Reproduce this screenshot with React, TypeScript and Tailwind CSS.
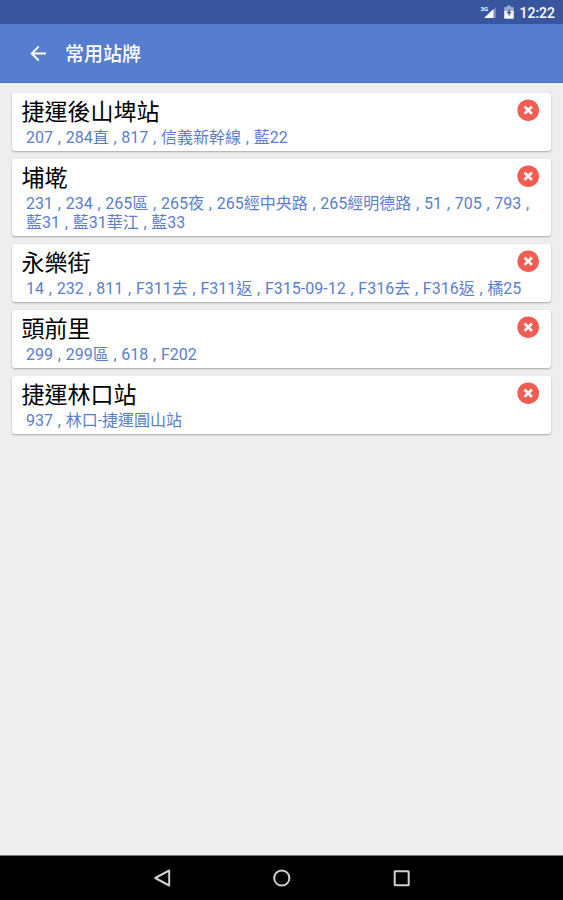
const stops = [
  { name: "捷運後山埤站", lines: ["207 , 284直 , 817 , 信義新幹線 , 藍22"] },
  {
    name: "埔墘",
    lines: [
      "231 , 234 , 265區 , 265夜 , 265經中央路 , 265經明德路 , 51 , 705 , 793 ,",
      "藍31 , 藍31華江 , 藍33",
    ],
  },
  { name: "永樂街", lines: ["14 , 232 , 811 , F311去 , F311返 , F315-09-12 , F316去 , F316返 , 橘25"] },
  { name: "頭前里", lines: ["299 , 299區 , 618 , F202"] },
  { name: "捷運林口站", lines: ["937 , 林口-捷運圓山站"] },
];

function StatusBar() {
  return (
    <div className="flex h-6 items-center justify-end bg-[#3a55a0] pr-2 text-white">
      <svg width="18" height="16" viewBox="0 0 18 16" className="mr-[6px]">
        <path d="M16 3 L16 14 L5 14 Z" fill="#fff" fillOpacity="0.3" />
        <path d="M13.500 5 L13.500 14 L4 14 Z" fill="#fff" />
        <text x="0.500" y="7" fontSize="6" fontWeight="700" fill="#fff" fontFamily="Roboto, sans-serif">3G</text>
      </svg>
      <svg width="10" height="14" viewBox="0 0 10 14" className="mr-[5px]">
        <path d="M3.2 0.5h3.6v1.4H9c.5 0 .8.3.8.8V6H.2V2.700c0-.5.3-.8.8-.8h2.200z" fill="#fff" fillOpacity="0.5" />
        <path d="M.2 6h9.600V13c0 .4-.3.8-.8.8H1c-.5 0-.8-.4-.8-.8Z" fill="#fff" fillOpacity="0.95" />
        <path d="M5.700 3.500 L2.600 8.300 H4.600 V11.500 L7.400 7.100 H5.700Z" fill="#3a55a0" />
      </svg>
      <span className="mt-px text-[14px] leading-none font-medium">12:22</span>
    </div>
  );
}

function RemoveIcon() {
  return (
    <svg width="22" height="22" viewBox="0 0 22 22" className="mt-[6px] mr-3 shrink-0">
      <circle cx="11.200" cy="11.200" r="10.800" fill="#f25c52" />
      <path d="M7.500 7.500 L14.900 14.900 M14.900 7.500 L7.500 14.900" stroke="#fff" strokeWidth="2.700" />
    </svg>
  );
}

export default function App() {
  return (
    <div
      lang="zh-Hant"
      className="flex h-[900px] w-[563px] flex-col overflow-hidden bg-[#eeeeee] font-[Roboto,'Noto_Sans_CJK_TC',sans-serif]"
    >
      <StatusBar />
      <header className="flex h-[59px] shrink-0 items-center border-b border-[#4f70bd] bg-[#567dcf] pl-[30px] text-white">
        <svg width="17" height="17" viewBox="0 0 17 17" fill="none" stroke="#fff" strokeWidth="1.900" className="mt-px">
          <path d="M16 8.500H2M8.700 1.500L1.700 8.500L8.700 15.500" />
        </svg>
        <h1 className="mt-[4px] ml-[18px] text-[19px] leading-6 font-medium">常用站牌</h1>
      </header>
      <main className="flex flex-1 flex-col gap-2 px-3 pt-[10px]">
        {stops.map((stop) => (
          <section
            key={stop.name}
            className="flex items-start rounded-[3px] bg-white pb-[4px] shadow-[0_1px_2px_rgba(0,0,0,0.3)]"
          >
            <div className="min-w-0 flex-1 pl-[10px]">
              <h2 className="-ml-[0.500px] h-[35px] text-[23px] leading-[39px] whitespace-nowrap text-black">{stop.name}</h2>
              <div className="-mr-8 pl-[4px] text-[16px] leading-[19px] [word-spacing:0.800px] whitespace-nowrap text-[#5b7ecb]">
                {stop.lines.map((line) => (
                  <p key={line}>{line}</p>
                ))}
              </div>
            </div>
            <RemoveIcon />
          </section>
        ))}
      </main>
      <nav className="flex h-[45px] shrink-0 justify-center gap-[101px] border-t border-[#777] bg-black pt-[12px]">
        <svg width="19" height="20" viewBox="0 0 19 20" fill="none" stroke="#d0d0d0" strokeWidth="2">
          <path d="M17.200 2.500V17.500L3.200 10Z" strokeLinejoin="round" />
        </svg>
        <svg width="19" height="20" viewBox="0 0 19 20" fill="none" stroke="#d0d0d0" strokeWidth="2">
          <circle cx="9.800" cy="10" r="7.600" />
        </svg>
        <svg width="19" height="20" viewBox="0 0 19 20" fill="none" stroke="#d0d0d0" strokeWidth="2">
          <rect x="2.700" y="3.300" width="14" height="14" rx="0.500" />
        </svg>
      </nav>
    </div>
  );
}
